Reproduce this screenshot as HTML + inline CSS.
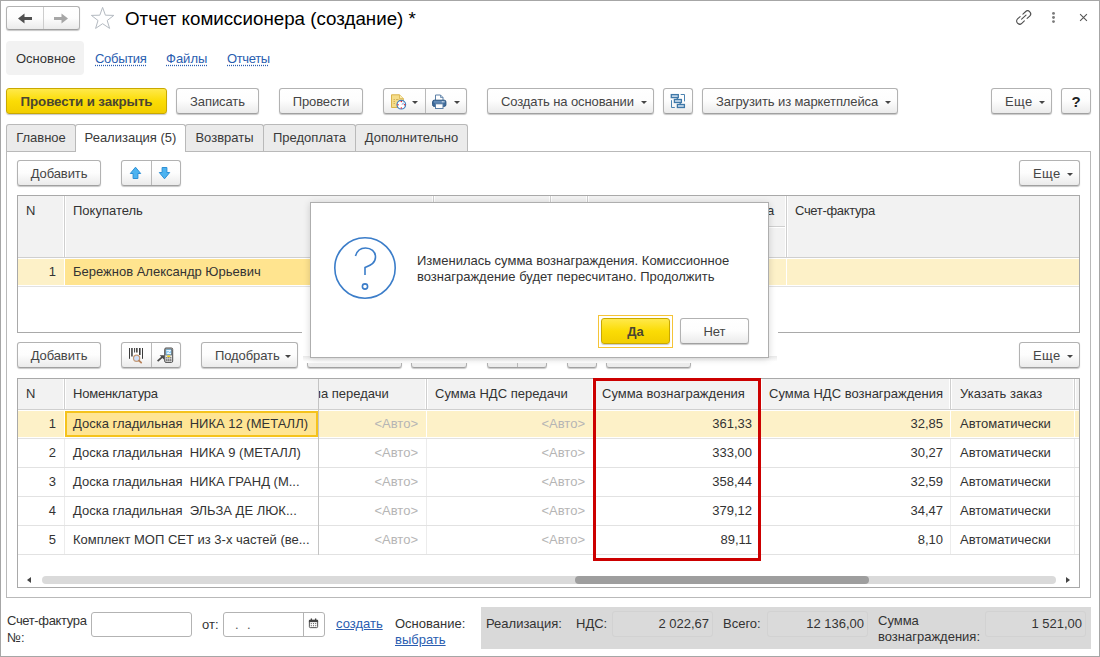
<!DOCTYPE html>
<html lang="ru">
<head>
<meta charset="utf-8">
<title>Отчет комиссионера (создание) *</title>
<style>
*{box-sizing:border-box;margin:0;padding:0}
html,body{width:1100px;height:657px;overflow:hidden;background:#fff}
body{font-family:"Liberation Sans",Arial,sans-serif;font-size:13px;color:#333;position:relative}
.a{position:absolute}
#frame{position:absolute;left:0;top:0;width:1100px;height:657px;border:1px solid #a6a6a6;pointer-events:none;z-index:50}
.btn{position:absolute;height:26px;padding-top:1px;border:1px solid #b2b2b2;border-bottom-color:#a0a0a0;border-radius:3px;background:linear-gradient(#ffffff 0%,#fdfdfd 50%,#ebebeb 100%);box-shadow:0 1px 1px rgba(0,0,0,.22);color:#454545;letter-spacing:-0.1px;font-size:13px;line-height:23px;text-align:center;white-space:nowrap}
.btn.y{background:linear-gradient(#ffe94a 0%,#fbdc05 50%,#f2ce00 100%);border-color:#c9a800;font-weight:bold;color:#4a4632}
.car{display:inline-block;width:0;height:0;border-left:3.5px solid transparent;border-right:3.5px solid transparent;border-top:4px solid #444;vertical-align:middle;margin-left:6px;position:relative;top:-1px}
.cr{position:absolute;right:6px;top:12px;width:0;height:0;border-left:3.5px solid transparent;border-right:3.5px solid transparent;border-top:3.5px solid #444}
.btn.c{text-align:left;padding-left:13px}
.ca{position:absolute;width:0;height:0;border-left:3.5px solid transparent;border-right:3.5px solid transparent;border-top:3.5px solid #444}
.lnk{color:#2a5db0;text-decoration:underline;text-decoration-style:dotted;text-underline-offset:2px}
.sl{color:#2a5db0;text-decoration:underline}
.tab{position:absolute;top:124px;height:27px;border:1px solid #b9b9b9;border-bottom:none;background:#ebebeb;border-radius:3px 3px 0 0;line-height:26px;text-align:center;color:#3a3a3a}
.tab.on{background:#fff;height:28px;z-index:3}
.grid{position:absolute;border:1px solid #a9a9a9;background:#fff;overflow:hidden}
.t{position:absolute;white-space:nowrap;line-height:16px}
.r{text-align:right}
.g{color:#b5b5b5}
.fld{top:11px;height:26px;border:1px solid #d2d2d2;border-radius:3px;background:#dadada}
.vl{position:absolute;width:1px;background:#d6d6d6}
.hl{position:absolute;height:1px;background:#e2e2e2}
</style>
</head>
<body>
<div id="frame"></div>

<!-- title bar -->
<div class="btn" style="left:6px;top:6px;width:74px;height:24px"></div>
<div class="a" style="left:43px;top:7px;width:1px;height:22px;background:#cdcdcd"></div>
<svg class="a" style="left:6px;top:6px" width="74" height="24" viewBox="0 0 74 24">
 <path d="M12 12.5 L18.5 7.5 V11 H26 V14 H18.5 V17.5 Z" fill="#505050"/>
 <path d="M62 12.5 L55.5 7.5 V11 H48 V14 H55.5 V17.5 Z" fill="#a6a6a6"/>
</svg>
<svg class="a" style="left:90px;top:6px" width="26" height="24" viewBox="0 0 26 24">
 <path d="M12.6 1.4 L15.4 9.2 L23.8 9.4 L17.2 14.5 L19.6 22.4 L12.6 17.7 L5.6 22.4 L8 14.5 L1.4 9.4 L9.8 9.2 Z" fill="#fff" stroke="#b4bac1" stroke-width="1"/>
</svg>
<div class="t" style="left:125px;top:7px;font-size:18.75px;line-height:24px;color:#000">Отчет комиссионера (создание) *</div>

<!-- nav tabs -->
<div class="a" style="left:6px;top:41px;width:78px;height:34px;background:#f2f2f2;border-radius:4px"></div>
<div class="t" style="left:16px;top:51px;color:#333">Основное</div>
<div class="t lnk" style="left:95px;top:51px;letter-spacing:-0.3px">События</div>
<div class="t lnk" style="left:166px;top:51px">Файлы</div>
<div class="t lnk" style="left:227px;top:51px;letter-spacing:-0.35px">Отчеты</div>

<!-- main toolbar -->
<div class="btn y" style="left:6px;top:88px;width:161px;height:26px;line-height:23px;font-size:13.33px">Провести и закрыть</div>
<div class="btn" style="left:176px;top:88px;width:83px">Записать</div>
<div class="btn" style="left:279px;top:88px;width:84px">Провести</div>
<div class="btn" style="left:383px;top:88px;width:84px"></div>
<div class="a" style="left:425px;top:89px;width:1px;height:24px;background:#b9b9b9"></div>
<div class="btn c" style="left:487px;top:88px;width:167px">Создать на основании<i class="cr"></i></div>
<div class="btn" style="left:663px;top:88px;width:30px"></div>
<div class="btn c" style="left:702px;top:88px;width:196px">Загрузить из маркетплейса<i class="cr"></i></div>
<div class="btn c" style="left:991px;top:88px;width:61px"><span style="letter-spacing:.4px">Еще</span><i class="cr"></i></div>
<div class="btn" style="left:1061px;top:88px;width:30px;font-weight:bold;color:#222;font-size:15px">?</div>


<!-- form tabs -->
<div class="a" style="left:6px;top:151px;width:1085px;height:447px;border:1px solid #b9b9b9;background:#fff"></div>
<div class="tab" style="left:6px;width:70px">Главное</div>
<div class="tab on" style="left:75px;width:111px">Реализация (5)</div>
<div class="tab" style="left:185px;width:79px">Возвраты</div>
<div class="tab" style="left:263px;width:93px">Предоплата</div>
<div class="tab" style="left:355px;width:113px">Дополнительно</div>

<!-- inner toolbar 1 -->
<div class="btn" style="left:17px;top:160px;width:84px">Добавить</div>
<div class="btn" style="left:121px;top:160px;width:60px"></div>
<div class="a" style="left:151px;top:161px;width:1px;height:24px;background:#b9b9b9"></div>
<div class="btn c" style="left:1019px;top:160px;width:61px"><span style="letter-spacing:.4px">Еще</span><i class="cr"></i></div>

<!-- grid 1 -->
<div class="grid" id="g1" style="left:17px;top:195px;width:1063px;height:138px">
 <div class="a" style="left:0;top:0;width:1061px;height:61px;background:#f2f2f2"></div>
 <div class="hl" style="left:0;top:61px;width:1061px;background:#cfcfcf"></div>
 <div class="a" style="left:0;top:63px;width:1061px;height:26px;background:#fdf1c8"></div>
 <div class="a" style="left:47px;top:63px;width:368px;height:26px;background:#ffe48f"></div>
 <div class="hl" style="left:570px;top:30px;width:198px;background:#cfcfcf"></div>
 <div class="hl" style="left:570px;top:31px;width:198px;background:#fff"></div>
 <div class="hl" style="left:0;top:90px;width:1061px"></div>
 <div class="vl" style="left:45px;top:0;height:61px;width:3px;background:#fff"></div>
 <div class="vl" style="left:46px;top:0;height:61px;background:#cfcfcf"></div>
 <div class="vl" style="left:46px;top:62px;height:28px;background:#fff"></div>
 <div class="vl" style="left:414px;top:0;height:61px;width:3px;background:#fff"></div>
 <div class="vl" style="left:415px;top:0;height:61px;background:#cfcfcf"></div>
 <div class="vl" style="left:415px;top:62px;height:28px;background:#fff"></div>
 <div class="vl" style="left:531px;top:0;height:61px;width:3px;background:#fff"></div>
 <div class="vl" style="left:532px;top:0;height:61px;background:#cfcfcf"></div>
 <div class="vl" style="left:532px;top:62px;height:28px;background:#fff"></div>
 <div class="vl" style="left:568px;top:0;height:61px;width:3px;background:#fff"></div>
 <div class="vl" style="left:569px;top:0;height:61px;background:#cfcfcf"></div>
 <div class="vl" style="left:569px;top:62px;height:28px;background:#fff"></div>
 <div class="vl" style="left:767px;top:0;height:61px;width:3px;background:#fff"></div>
 <div class="vl" style="left:768px;top:0;height:61px;background:#cfcfcf"></div>
 <div class="vl" style="left:768px;top:62px;height:28px;background:#fff"></div>
 <div class="t" style="left:8px;top:7px">N</div>
 <div class="t" style="left:55px;top:7px">Покупатель</div>
 <div class="t" style="left:749px;top:7px">а</div>
 <div class="t" style="left:777px;top:7px;letter-spacing:-0.33px">Счет-фактура</div>
 <div class="t r" style="left:0;width:38px;top:68px">1</div>
 <div class="t" style="left:55px;top:68px">Бережнов Александр Юрьевич</div>
</div>

<!-- inner toolbar 2 -->
<div class="btn" style="left:17px;top:342px;width:84px">Добавить</div>
<div class="btn" style="left:121px;top:342px;width:60px"></div>
<div class="a" style="left:151px;top:343px;width:1px;height:24px;background:#b9b9b9"></div>
<div class="btn c" style="left:201px;top:342px;width:97px">Подобрать<i class="cr"></i></div>
<div class="btn c" style="left:1019px;top:342px;width:61px"><span style="letter-spacing:.4px">Еще</span><i class="cr"></i></div>

<div class="btn" style="left:307px;top:342px;width:95px"></div>
<div class="btn" style="left:411px;top:342px;width:56px"></div>
<div class="btn" style="left:487px;top:342px;width:60px"></div>
<div class="a" style="left:517px;top:343px;width:1px;height:24px;background:#b9b9b9"></div>
<div class="btn" style="left:567px;top:342px;width:30px"></div>
<div class="btn" style="left:606px;top:342px;width:85px"></div>

<!-- grid 2 -->
<div class="grid" id="g2" style="left:17px;top:378px;width:1063px;height:210px">
 <div class="a" style="left:0;top:0;width:1061px;height:30px;background:#f2f2f2"></div>
 <div class="hl" style="left:0;top:30px;width:1061px;background:#cfcfcf"></div>
 <div class="a" style="left:0;top:32px;width:1061px;height:26px;background:#fdf1c8"></div>
 <div class="vl" style="left:45px;top:0;height:30px;width:3px;background:#fff"></div>
 <div class="vl" style="left:46px;top:0;height:30px;background:#cfcfcf"></div>
 <div class="vl" style="left:46px;top:31px;height:28px;background:#fff"></div>
 <div class="vl" style="left:46px;top:60px;height:116px;background:#ececec"></div>
 <div class="vl" style="left:407px;top:0;height:30px;width:3px;background:#fff"></div>
 <div class="vl" style="left:408px;top:0;height:30px;background:#cfcfcf"></div>
 <div class="vl" style="left:408px;top:31px;height:28px;background:#fff"></div>
 <div class="vl" style="left:408px;top:60px;height:116px;background:#ececec"></div>
 <div class="vl" style="left:574px;top:0;height:30px;width:3px;background:#fff"></div>
 <div class="vl" style="left:575px;top:0;height:30px;background:#cfcfcf"></div>
 <div class="vl" style="left:575px;top:31px;height:28px;background:#fff"></div>
 <div class="vl" style="left:575px;top:60px;height:116px;background:#ececec"></div>
 <div class="vl" style="left:741px;top:0;height:30px;width:3px;background:#fff"></div>
 <div class="vl" style="left:742px;top:0;height:30px;background:#cfcfcf"></div>
 <div class="vl" style="left:742px;top:31px;height:28px;background:#fff"></div>
 <div class="vl" style="left:742px;top:60px;height:116px;background:#ececec"></div>
 <div class="vl" style="left:931px;top:0;height:30px;width:3px;background:#fff"></div>
 <div class="vl" style="left:932px;top:0;height:30px;background:#cfcfcf"></div>
 <div class="vl" style="left:932px;top:31px;height:28px;background:#fff"></div>
 <div class="vl" style="left:932px;top:60px;height:116px;background:#ececec"></div>
 <div class="vl" style="left:1055px;top:0;height:30px;width:3px;background:#fff"></div>
 <div class="vl" style="left:1056px;top:0;height:30px;background:#cfcfcf"></div>
 <div class="vl" style="left:1056px;top:31px;height:28px;background:#fff"></div>
 <div class="vl" style="left:1056px;top:60px;height:116px;background:#ececec"></div>
 <div class="a" style="left:47px;top:32px;width:253px;height:26px;background:#ffe594;border:2px solid #f5c31c"></div>
 <div class="vl" style="left:300px;top:0;height:176px;background:#c4c4c4;z-index:2"></div>
 <div class="hl" style="left:0;top:59px;width:1061px"></div>
 <div class="hl" style="left:0;top:88px;width:1061px"></div>
 <div class="hl" style="left:0;top:117px;width:1061px"></div>
 <div class="hl" style="left:0;top:146px;width:1061px"></div>
 <div class="hl" style="left:0;top:175px;width:1061px"></div>
 <div class="t" style="left:8px;top:7px">N</div>
 <div class="t" style="left:55px;top:7px;letter-spacing:-0.2px">Номенклатура</div>
 <div class="a" style="left:301px;top:7px;width:100px;height:18px;overflow:hidden"><div class="t" style="left:-7px;top:0">ма передачи</div></div>
 <div class="t" style="left:417px;top:7px">Сумма НДС передачи</div>
 <div class="t" style="left:584px;top:7px">Сумма вознаграждения</div>
 <div class="t" style="left:751px;top:7px">Сумма НДС вознаграждения</div>
 <div class="t" style="left:942px;top:7px">Указать заказ</div>
 <div class="t r" style="left:0;width:38px;top:37px">1</div>
 <div class="t" style="left:55px;top:37px">Доска гладильная&nbsp; НИКА 12 (МЕТАЛЛ)</div>
 <div class="t r g" style="left:310px;width:90px;top:37px">&lt;Авто&gt;</div>
 <div class="t r g" style="left:477px;width:90px;top:37px">&lt;Авто&gt;</div>
 <div class="t r" style="left:644px;width:90px;top:37px">361,33</div>
 <div class="t r" style="left:834px;width:91px;top:37px">32,85</div>
 <div class="t" style="left:942px;top:37px">Автоматически</div>
 <div class="t r" style="left:0;width:38px;top:66px">2</div>
 <div class="t" style="left:55px;top:66px">Доска гладильная&nbsp; НИКА 9 (МЕТАЛЛ)</div>
 <div class="t r g" style="left:310px;width:90px;top:66px">&lt;Авто&gt;</div>
 <div class="t r g" style="left:477px;width:90px;top:66px">&lt;Авто&gt;</div>
 <div class="t r" style="left:644px;width:90px;top:66px">333,00</div>
 <div class="t r" style="left:834px;width:91px;top:66px">30,27</div>
 <div class="t" style="left:942px;top:66px">Автоматически</div>
 <div class="t r" style="left:0;width:38px;top:95px">3</div>
 <div class="t" style="left:55px;top:95px">Доска гладильная&nbsp; НИКА ГРАНД (М...</div>
 <div class="t r g" style="left:310px;width:90px;top:95px">&lt;Авто&gt;</div>
 <div class="t r g" style="left:477px;width:90px;top:95px">&lt;Авто&gt;</div>
 <div class="t r" style="left:644px;width:90px;top:95px">358,44</div>
 <div class="t r" style="left:834px;width:91px;top:95px">32,59</div>
 <div class="t" style="left:942px;top:95px">Автоматически</div>
 <div class="t r" style="left:0;width:38px;top:124px">4</div>
 <div class="t" style="left:55px;top:124px">Доска гладильная&nbsp; ЭЛЬЗА ДЕ ЛЮК...</div>
 <div class="t r g" style="left:310px;width:90px;top:124px">&lt;Авто&gt;</div>
 <div class="t r g" style="left:477px;width:90px;top:124px">&lt;Авто&gt;</div>
 <div class="t r" style="left:644px;width:90px;top:124px">379,12</div>
 <div class="t r" style="left:834px;width:91px;top:124px">34,47</div>
 <div class="t" style="left:942px;top:124px">Автоматически</div>
 <div class="t r" style="left:0;width:38px;top:153px">5</div>
 <div class="t" style="left:55px;top:153px">Комплект МОП СЕТ из 3-х частей (ве...</div>
 <div class="t r g" style="left:310px;width:90px;top:153px">&lt;Авто&gt;</div>
 <div class="t r g" style="left:477px;width:90px;top:153px">&lt;Авто&gt;</div>
 <div class="t r" style="left:644px;width:90px;top:153px">89,11</div>
 <div class="t r" style="left:834px;width:91px;top:153px">8,10</div>
 <div class="t" style="left:942px;top:153px">Автоматически</div>
 <div class="a" style="left:24px;top:197px;width:1014px;height:8px;border-radius:4px;background:#dadada"></div>
 <div class="a" style="left:557px;top:197px;width:294px;height:8px;border-radius:4px;background:#9e9e9e"></div>
 <div class="a" style="left:9px;top:198px;width:0;height:0;border-top:3px solid transparent;border-bottom:3px solid transparent;border-right:4px solid #444"></div>
 <div class="a" style="left:1048px;top:198px;width:0;height:0;border-top:3px solid transparent;border-bottom:3px solid transparent;border-left:4px solid #444"></div>
</div>
<div class="a" style="left:593px;top:378px;width:168px;height:183px;border:3px solid #cc0000;z-index:5"></div>

<!-- footer -->
<div class="a" id="foot" style="left:0;top:600px;width:1100px;height:57px">
 <div class="t" style="left:7px;top:13px;letter-spacing:-0.35px">Счет-фактура</div>
 <div class="t" style="left:7px;top:30px">№:</div>
 <div class="a" style="left:91px;top:12px;width:101px;height:25px;border:1px solid #b3b3b3;border-radius:3px;background:#fff"></div>
 <div class="t" style="left:202px;top:17px">от:</div>
 <div class="a" style="left:223px;top:12px;width:102px;height:25px;border:1px solid #b3b3b3;border-radius:3px;background:#fff"></div>
 <div class="a" style="left:303px;top:13px;width:1px;height:23px;background:#b3b3b3"></div>
 <div class="t" style="left:235px;top:17px;color:#555">.</div><div class="t" style="left:247px;top:17px;color:#555">.</div>
 <svg class="a" style="left:308px;top:17.5px" width="11" height="11" viewBox="0 0 12 12"><rect x="1.5" y="2.5" width="9" height="8" rx="1" fill="#fff" stroke="#444" stroke-width="1"/><rect x="1" y="2" width="10" height="2.5" fill="#444"/><rect x="3" y="0.5" width="1.4" height="2.5" fill="#444"/><rect x="7.6" y="0.5" width="1.4" height="2.5" fill="#444"/><g fill="#666"><rect x="3" y="5.5" width="1.2" height="1.2"/><rect x="5.4" y="5.5" width="1.2" height="1.2"/><rect x="7.8" y="5.5" width="1.2" height="1.2"/><rect x="3" y="7.8" width="1.2" height="1.2"/><rect x="5.4" y="7.8" width="1.2" height="1.2"/><rect x="7.8" y="7.8" width="1.2" height="1.2"/></g></svg>
 <div class="t sl" style="left:336px;top:16px">создать</div>
 <div class="t" style="left:395px;top:16px">Основание:</div>
 <div class="t sl" style="left:395px;top:32px">выбрать</div>
 <div class="a" style="left:481px;top:7px;width:610px;height:42px;background:#d9d9d9"></div>
 <div class="t" style="left:486px;top:16px">Реализация:</div>
 <div class="t" style="left:576px;top:16px">НДС:</div>
 <div class="a fld" style="left:612px;width:101px"></div>
 <div class="t r" style="left:612px;width:97px;top:16px">2 022,67</div>
 <div class="t" style="left:723px;top:16px">Всего:</div>
 <div class="a fld" style="left:767px;width:101px"></div>
 <div class="t r" style="left:767px;width:97px;top:16px">12 136,00</div>
 <div class="t" style="left:878px;top:13px">Сумма</div>
 <div class="t" style="left:878px;top:29px">вознаграждения:</div>
 <div class="a fld" style="left:985px;width:101px"></div>
 <div class="t r" style="left:985px;width:97px;top:16px">1 521,00</div>
</div>

<!-- icons -->
<svg class="a" style="left:391px;top:94px" width="16" height="16" viewBox="0 0 16 16">
 <path d="M0.5 0.8 H8.5 L12.3 4.6 V13.5 H0.5 Z" fill="#f5dd8a" stroke="#d9b34a" stroke-width="1"/>
 <path d="M8.5 0.8 V4.6 H12.3" fill="#fbeeb8" stroke="#d9b34a" stroke-width="0.8"/>
 <path d="M2.5 5.5 H4 M5 5.5 H7.5 M2.5 7.5 H4 M2.5 9.5 H4" stroke="#d4b35a" stroke-width="1"/>
 <circle cx="10.3" cy="10.7" r="4.3" fill="#fff" stroke="#3f7fc1" stroke-width="1.2"/>
 <path d="M10.3 10.7 L12.4 8.2 L12.9 10.2 Z" fill="#8aa9dd"/>
 <g fill="#e8222a"><circle cx="10.3" cy="7.4" r="0.75"/><circle cx="10.3" cy="14" r="0.75"/><circle cx="7" cy="10.7" r="0.75"/><circle cx="13.6" cy="10.7" r="0.75"/></g>
</svg>
<div class="ca" style="left:412px;top:101px"></div>
<svg class="a" style="left:432px;top:93.5px" width="15" height="16" viewBox="0 0 15 16">
 <path d="M3.5 6 V1 H8.5 L11 3.5 V6" fill="#fff" stroke="#5b7fa6" stroke-width="1"/>
 <path d="M8.5 1 V3.5 H11" fill="none" stroke="#5b7fa6" stroke-width="0.8"/>
 <rect x="0.6" y="6.2" width="13.3" height="6.2" rx="1.6" fill="#3f6c9c" stroke="#2d5783" stroke-width="1"/>
 <rect x="1.8" y="7.2" width="10.8" height="1.4" fill="#6f95be"/>
 <rect x="9.8" y="7.3" width="1" height="1" fill="#fff"/><rect x="11.4" y="7.3" width="1" height="1" fill="#fff"/>
 <rect x="3.5" y="9.8" width="7.5" height="4.7" fill="#fff" stroke="#5b7fa6" stroke-width="1"/>
</svg>
<div class="ca" style="left:454px;top:101px"></div>
<svg class="a" style="left:670px;top:93px" width="16" height="16" viewBox="0 0 16 16">
 <g fill="#c6d9ea" stroke="#3f78a8" stroke-width="1.3">
  <rect x="1.3" y="1.6" width="7" height="3"/>
  <rect x="4.4" y="6.5" width="7" height="3"/>
  <rect x="7.4" y="11.5" width="7" height="3"/>
 </g>
 <path d="M7.3 4.6 V6.5 M10.2 9.5 V11.5" stroke="#3f78a8" stroke-width="1.3" fill="none"/>
 <path d="M10.7 1.5 H14.5 V8.4" stroke="#4b82b0" stroke-width="1" fill="none"/>
 <path d="M1.5 7.2 V14.5 H4.8" stroke="#4b82b0" stroke-width="1" fill="none"/>
</svg>
<svg class="a" style="left:129px;top:166px" width="14" height="14" viewBox="0 0 14 14">
 <path d="M6.5 1.2 L11.7 7.5 H8.9 V12.5 H4.1 V7.5 H1.3 Z" fill="#4db3f0" stroke="#2c8fd6" stroke-width="1" stroke-linejoin="round"/>
</svg>
<svg class="a" style="left:158px;top:166px" width="14" height="14" viewBox="0 0 14 14">
 <path d="M6.5 12.8 L11.7 6.5 H8.9 V1.5 H4.1 V6.5 H1.3 Z" fill="#4db3f0" stroke="#2c8fd6" stroke-width="1" stroke-linejoin="round"/>
</svg>
<svg class="a" style="left:128px;top:347px" width="16" height="17" viewBox="0 0 16 17">
 <g fill="#3a3a3a"><rect x="1" y="1" width="1" height="10.8"/><rect x="3.2" y="1" width="1.5" height="8.5"/><rect x="6.1" y="1" width="1" height="4.5"/><rect x="8.1" y="1" width="1.5" height="4.5"/><rect x="11" y="1" width="1.6" height="7"/><rect x="14" y="1" width="1" height="10.8"/></g>
 <circle cx="8.6" cy="11.2" r="3.1" fill="#cfe0fa" stroke="#c49a78" stroke-width="1.2"/>
 <path d="M11 13.6 L13.2 15.6" stroke="#b9835a" stroke-width="1.8" stroke-linecap="round"/>
</svg>
<svg class="a" style="left:156px;top:347px" width="18" height="17" viewBox="0 0 18 17">
 <path d="M1.6 14.2 L7 9.4" stroke="#4a4a4a" stroke-width="1.8" fill="none"/>
 <path d="M3.6 8.2 H8.4 V13 Z" fill="#4a4a4a"/>
 <rect x="8.7" y="1" width="8" height="14.4" rx="1.3" fill="#e9e9e9" stroke="#4d4d4d" stroke-width="1"/>
 <rect x="9.7" y="2" width="6" height="6" fill="#8fcdf3" stroke="#555" stroke-width="0.6"/>
 <path d="M10.5 3.5 H14.8 L11 6.5 H15" stroke="#e8f5ff" stroke-width="1" fill="none"/>
 <rect x="11.2" y="8.5" width="3" height="1.5" fill="#f2d21c"/>
 <g fill="#fff" stroke="#777" stroke-width="0.4"><rect x="10" y="10.3" width="1.5" height="1.3"/><rect x="12" y="10.3" width="1.5" height="1.3"/><rect x="14" y="10.3" width="1.5" height="1.3"/><rect x="10" y="12.1" width="1.5" height="1.3"/><rect x="12" y="12.1" width="1.5" height="1.3"/><rect x="14" y="12.1" width="1.5" height="1.3"/><rect x="10" y="13.7" width="1.5" height="1"/><rect x="12" y="13.7" width="1.5" height="1"/><rect x="14" y="13.7" width="1.5" height="1"/></g>
</svg>
<svg class="a" style="left:1014px;top:8px" width="20" height="20" viewBox="0 0 20 20">
 <g fill="none" stroke="#4d4d4d" stroke-width="1.2" stroke-linecap="round" transform="translate(0.8 0.6) scale(0.92)">
  <path d="M8.8 6 L11.6 3.4 A3.3 3.3 0 0 1 16.2 8.2 L13.4 10.6"/>
  <path d="M10.4 13.4 L7.6 16 A3.3 3.3 0 0 1 3 11.2 L5.8 8.8"/>
  <path d="M7.4 11.4 L12.2 7.1"/>
 </g>
</svg>
<svg class="a" style="left:1050px;top:10px" width="8" height="16" viewBox="0 0 8 16"><g fill="#7b7b7b"><circle cx="3.5" cy="3.4" r="1.45"/><circle cx="3.5" cy="7.5" r="1.45"/><circle cx="3.5" cy="11.6" r="1.45"/></g></svg>
<svg class="a" style="left:1078px;top:12px" width="12" height="12" viewBox="0 0 12 12"><path d="M2.1 2.1 L8.9 8.9 M8.9 2.1 L2.1 8.9" stroke="#555" stroke-width="1.1" fill="none"/></svg>


<div class="a" style="left:302px;top:288px;width:476px;height:72px;background:#fff;z-index:19"></div>
<div class="a" style="left:303px;top:356px;width:474px;height:7px;background:linear-gradient(#e9e9e9,#fff 80%);z-index:19;border-radius:0 0 4px 4px"></div>
<!-- dialog -->
<div class="a" id="dlg" style="left:310px;top:202px;width:459px;height:156px;background:#fff;border:1px solid #aeaeae;z-index:20;box-shadow:0 1px 7px rgba(0,0,0,.16)">
 <svg class="a" style="left:21px;top:32px" width="66" height="66" viewBox="0 0 66 66"><circle cx="33" cy="33" r="30.2" fill="none" stroke="#3b7dc9" stroke-width="1.6"/><path d="M23.5 21 C25 15.5 29 13 33.5 13 C39 13 43.5 16.5 43.5 22 C43.5 28.5 37.5 30.5 33 32.5 V40" fill="none" stroke="#3b7dc9" stroke-width="1.6"/><circle cx="33" cy="51.5" r="2.6" fill="none" stroke="#3b7dc9" stroke-width="1.6"/></svg>
 <div class="t" style="left:106px;top:50px">Изменилась сумма вознаграждения. Комиссионное</div>
 <div class="t" style="left:106px;top:66px">вознаграждение будет пересчитано. Продолжить</div>
 <div class="a" style="left:287px;top:112px;width:75px;height:33px;border:1px solid #f5c437"></div>
 <div class="btn y" style="left:290px;top:115px;width:69px;height:26px;font-size:13px">Да</div>
 <div class="btn" style="left:369px;top:115px;width:69px;height:26px">Нет</div>
</div>

</body>
</html>
